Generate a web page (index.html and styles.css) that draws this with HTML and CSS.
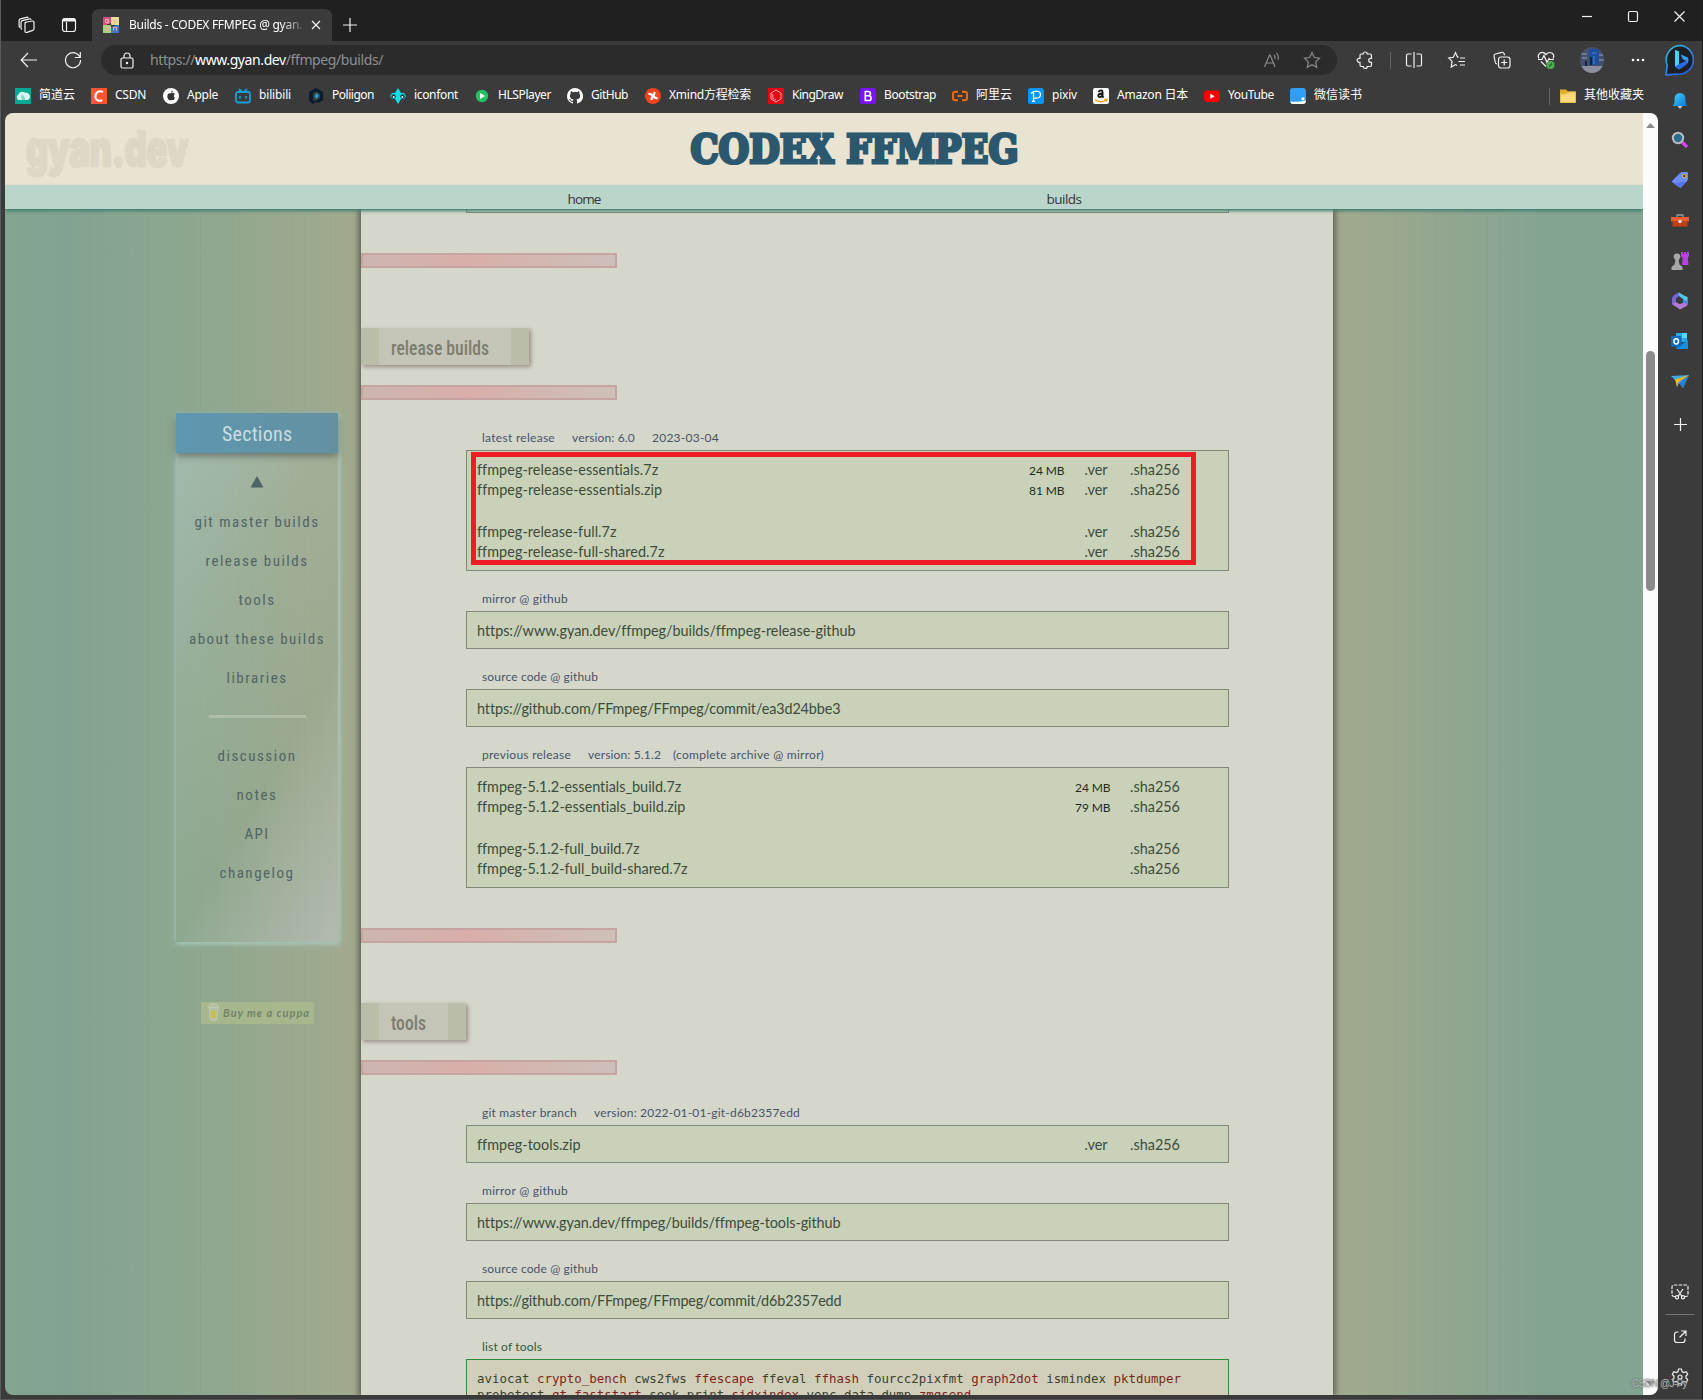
FILE: index.html
```html
<!DOCTYPE html>
<html lang="zh-CN">
<head>
<meta charset="utf-8">
<title>Builds - CODEX FFMPEG @ gyan.dev</title>
<link rel="stylesheet" href="styles.css">
</head>
<body>
<div class="window">
  <header class="titlebar">
    <svg class="ico ws" width="18" height="18" viewBox="0 0 18 18"><path d="M6.500 6.500 14 5q2-.2 2 1.600v6.200q0 1.200-1.300 1.600L9 16.400q-1.800.4-2-1.300V7.500M4 13.500q-1-.3-1-1.500V6.500q0-1.500 1.300-1.900L11.500 2.800q1.200-.2 1.700.9M2 11.500q-.9-.4-.9-1.500V4.800Q1 3.300 2.400 2.900L8.500 1.300q1.200-.3 1.800.6M7 7.800q0-1.500 1.300-1.900"/></svg>
    <svg class="ico tabs" width="16" height="16" viewBox="0 0 16 16"><rect x="1.500" y="1.500" width="13" height="13" rx="2.500"/><path d="M5.500 5v9.500" /><path d="M2 3h12" stroke-width="3"/></svg>
    <div class="tab">
      <svg width="16" height="16" viewBox="0 0 16 16"><path fill="#d24f84" d="M0 0h8v8H0z"/><path fill="#e6dc92" d="M8 0h8v8H8z"/><path fill="#9fd67f" d="M0 8h8v8H0z"/><path fill="#4477c4" d="M8 8h8v8H8z"/><path d="M2.500 2.500h3v3h-3zM5 3v4M10.500 2.500l1.500 2 1.500-2M12 4.500 11 6.500M2.500 10.500h3v3h-3M10.500 13.500v-3h3v3" fill="none" stroke="#f0b0a0"/><path d="M4 7.500h3M9 8.500h3M7 6l2 4" stroke="#333"/></svg>
      <span class="tab-title"><span data-w="173">Builds - CODEX FFMPEG @ gyan.</span></span>
      <svg class="ico" width="10" height="10" viewBox="0 0 10 10"><path d="m1 1 8 8M9 1 1 9"/></svg>
    </div>
    <svg class="ico newtab" width="14" height="14" viewBox="0 0 14 14"><path d="M7 0v14M0 7h14"/></svg>
    <div class="caption">
      <svg class="ico" width="10" height="11" viewBox="0 0 10 11"><path d="M0 5.500h10"/></svg>
      <svg class="ico" width="10" height="11" viewBox="0 0 10 11"><rect x=".5" y=".5" width="9" height="10" rx="1.500"/></svg>
      <svg class="ico" width="11" height="11" viewBox="0 0 11 11"><path d="m.5.5 10 10M10.500.5l-10 10"/></svg>
    </div>
  </header>

  <div class="toolbar">
    <svg class="ico" width="18" height="16" viewBox="0 0 18 16"><path d="M17 8H1.500M8 1 1.200 8 8 15"/></svg>
    <svg class="ico" width="18" height="18" viewBox="0 0 18 18"><path d="M16 6.500A7.500 7.500 0 1 0 16.500 9M16.300 1v5.500h-5.500"/></svg>
    <div class="omnibox">
      <svg class="ico" width="14" height="17" viewBox="0 0 14 17"><rect x="1" y="6" width="12" height="10" rx="1.500"/><path d="M4 6V4a3 3 0 0 1 6 0v2"/><circle cx="7" cy="11" r=".6"/></svg>
      <span class="url"><span data-w="233">https://<b>www.gyan.dev</b>/ffmpeg/builds/</span></span>
      <svg class="ico dim" width="17" height="17" viewBox="0 0 17 17"><path d="m1.500 15 5-12h.6l5 12M3.500 11h6.500M11 3q1.500 1.800.8 4M13.300.8q3 3 1.500 7" /></svg>
      <svg class="ico dim" width="18" height="18" viewBox="0 0 18 18"><path d="m9 1.500 2.300 5 5.200.7-3.800 3.700 1 5.400L9 13.700l-4.700 2.600 1-5.400L1.500 7.200l5.200-.7z"/></svg>
    </div>
    <svg class="ico" width="18" height="18" viewBox="0 0 18 18"><path d="M5 3h2.200a2 2 0 0 1 4 0H14q1.500 0 1.500 1.500v2.800h-.8a2 2 0 0 0 0 4h.8v2.700q0 1.500-1.500 1.500h-2.800a2 2 0 0 1-4 0H5.500Q4 15.500 4 14v-2.700h-.8a2 2 0 0 1 0-4H4V4.500Q4 3 5 3z"/></svg>
    <i class="vline"></i>
    <svg class="ico" width="18" height="18" viewBox="0 0 18 18"><path d="M6.500 3H3Q1.500 3 1.500 4.500v9Q1.500 15 3 15h3.500M9 1v16M11.500 3H15q1.500 0 1.500 1.500v9q0 1.500-1.500 1.500h-3.500"/></svg>
    <svg class="ico" width="18" height="18" viewBox="0 0 18 18"><path d="m10.500 6.200-1-.1-2-4.500-2.200 4.700-4.500.7 3.300 3.400L3.200 16l4.300-2.400 1.500.9M12 7h5M10.500 10.500H17M12 14h5"/></svg>
    <svg class="ico" width="18" height="18" viewBox="0 0 18 18"><rect x="5.500" y="6" width="11.500" height="11" rx="2.500"/><path d="M11.200 8.500v6M8.200 11.500h6M4 13q-1.500-.3-1.800-2L1 5.200Q.9 3.500 2.500 3L8.700 1.300q1.700-.3 2.300 1.200l.6 1.800"/></svg>
    <svg class="ico" width="18" height="18" viewBox="0 0 18 18"><path d="M2 7.500Q0 4 3.200 1.900 6.500.5 9 3.500q2.500-3 5.800-1.500Q18 4 16 7.500M1 8.500h4l2-4 3 7 2-4 1 1h4M4 10.500l5 5"/><circle cx="13.500" cy="14" r="4" fill="#4caf50" stroke="none"/><path d="m12 15.500 3-3" stroke="#245a28"/></svg>
    <svg width="24" height="26" viewBox="0 0 24 26"><clipPath id="av"><ellipse cx="12" cy="13" rx="12" ry="13"/></clipPath><g clip-path="url(#av)"><path fill="#46506a" d="M0 0h24v26H0z"/><path fill="#1d4fa0" d="M9 2h10v16H9z"/><path fill="#8d8f9e" d="M0 19h24v7H0z"/><path d="M1 7h6M2 11h5M19 8h5M19 13h5" stroke="#8ba0c8"/><path d="M12 6h5M14 9v8" stroke="#4f7fc8"/><path fill="#15204a" d="M10 10h2v8h-2zM5 14h2v5H5z"/></g></svg>
    <svg width="14" height="4" viewBox="0 0 14 4" fill="#fff"><circle cx="2" cy="2" r="1.300"/><circle cx="7" cy="2" r="1.300"/><circle cx="12" cy="2" r="1.300"/></svg>
    <svg width="32" height="32" viewBox="0 0 32 32"><defs><linearGradient id="bg" x1="0" y1="0" x2=".6" y2="1"><stop offset="0" stop-color="#38c6d8"/><stop offset="1" stop-color="#2a62e8"/></linearGradient></defs><path d="M16.500 1.500a14.300 14.300 0 1 1-3 28.600l-11.500.7 1.200-9.500A14.500 14.500 0 0 1 16.500 1.500z" fill="#1c1f26" stroke="url(#bg)" stroke-width="1.600"/><path fill="#2f9df4" d="m11 6 4 1.500v13L22.500 17l-4-2-1.700-4.500 7.200 3q1.500 4.500-2 7L15 25.500l-4-3z"/><path fill="#2a66e6" d="m15 20.500-4 2 4 3 7-4.500q2-2 1-5z"/><path fill="#4bd0f2" d="m11 6 4 1.500v12l-4 3z"/></svg>
  </div>

  <div class="main">
    <div class="left">
      <nav class="bookmarks">
        <a><svg width="16" height="16" viewBox="0 0 16 16"><path fill="#00a896" d="M0 0h16v16H0z"/><path fill="#d8f7f1" d="M3.500 12a3 3 0 0 1 0-5.500A4 4 0 0 1 10 4.700 4 4 0 0 1 13 12z"/><path fill="#7fd6c9" d="M6 8q3-3 4 4H7z"/></svg><span data-w="36">简道云</span></a>
        <a><svg width="16" height="16" viewBox="0 0 16 16"><path fill="#fc5531" d="M0 0h16v16H0z"/><path d="M12 4.200Q9 2.500 6.300 4.200 3.800 6.500 4.500 10q1.500 4 6.800 2.300" fill="none" stroke="#fff" stroke-width="2"/></svg><span data-w="31">CSDN</span></a>
        <a><svg width="16" height="16" viewBox="0 0 16 16"><circle cx="8" cy="8" r="8" fill="#fff"/><path fill="#333" d="M8 5.300q3-1.200 3.800.7-2 2 .2 4-1.500 3.200-4 2-2.500 1-3.700-2.500Q4 4.500 8 5.300zM8 4.700q0-2 2-2.200 0 2-2 2.200z"/></svg><span data-w="31">Apple</span></a>
        <a><svg width="16" height="16" viewBox="0 0 16 16" fill="none" stroke="#12a0dc" stroke-width="1.800"><rect x="1" y="4" width="14" height="10.500" rx="2"/><path d="M4 1l2.500 2.500M12 1 9.500 3.500M5 8v2.500M11 8v2.500"/></svg><span data-w="32">bilibili</span></a>
        <a><svg width="16" height="16" viewBox="0 0 16 16"><path fill="#0a1d2e" d="m8 0 7 4v8l-5 3-2-1-3 2-4-3V4z"/><path fill="#3a3a3a" d="m8 3.500 4 2.300v4.400l-4 2.300-1.500 1L5 12V5z"/><path fill="#18a2cf" d="m8.500 4.700 2.500 3-2.500 3.500L6.500 8z"/></svg><span data-w="42">Poliigon</span></a>
        <a><svg width="16" height="16" viewBox="0 0 16 16"><path fill="#0de1ea" d="m8 0 3 5h3l2 3-2 3h-3l-3 5-3-5H2L0 8l2-3h3z"/><circle cx="3.500" cy="8.500" r="2.200" fill="#203a44"/><circle cx="12.500" cy="8.500" r="2.200" fill="#203a44"/><circle cx="3.700" cy="9" r=".9" fill="#fff"/><circle cx="12.300" cy="9" r=".9" fill="#fff"/></svg><span data-w="44">iconfont</span></a>
        <a><svg width="16" height="16" viewBox="0 0 16 16"><circle cx="8" cy="8" r="6.200" fill="#25c263"/><path fill="#fff" d="m6 5 5 3-5 3z"/></svg><span data-w="53">HLSPlayer</span></a>
        <a><svg width="16" height="16" viewBox="0 0 16 16"><path fill="#fff" d="M8 0a8 8 0 0 0-2.530 15.590c.4.070.55-.17.55-.38v-1.490c-2.010.37-2.530-.49-2.690-.94-.09-.23-.48-.94-.82-1.130-.28-.15-.68-.52-.01-.53.63-.01 1.080.58 1.230.82.720 1.210 1.870.87 2.330.66.070-.52.280-.87.510-1.070-1.780-.2-3.640-.89-3.640-3.950 0-.87.310-1.590.820-2.150-.08-.2-.36-1.020.08-2.120 0 0 .67-.21 2.200.82a7.400 7.400 0 0 1 4 0c1.530-1.040 2.200-.82 2.200-.82.44 1.100.16 1.920.08 2.120.51.56.82 1.270.82 2.150 0 3.070-1.870 3.750-3.650 3.950.29.250.54.730.54 1.480v2.200c0 .21.15.46.55.38A8 8 0 0 0 8 0z"/></svg><span data-w="37">GitHub</span></a>
        <a><svg width="16" height="16" viewBox="0 0 16 16"><circle cx="8" cy="8" r="8" fill="#f0441f"/><path d="M3.500 6q2.500-.5 4.500 2t4.500 2M9.500 4q0 3-1.500 4t-1.500 4" stroke="#fff" stroke-width="2.300" fill="none"/></svg><span data-w="82">Xmind方程检索</span></a>
        <a><svg width="16" height="16" viewBox="0 0 16 16"><path fill="#e30613" d="M0 0h16v16H0z"/><path d="m8 2 5 3v6l-5 3-5-3V5zM4.800 6v4.200L8 12" fill="none" stroke="#f6a9a9"/></svg><span data-w="51">KingDraw</span></a>
        <a><svg width="16" height="16" viewBox="0 0 16 16"><rect width="16" height="16" rx="2.500" fill="#7a11f7"/><path d="M5.300 3.500v9h3.500a2.300 2.300 0 0 0 0-4.700H5.300h3a2.100 2.100 0 0 0 0-4.300z" fill="none" stroke="#fff" stroke-width="1.600"/></svg><span data-w="52">Bootstrap</span></a>
        <a><svg width="16" height="16" viewBox="0 0 16 16" fill="none" stroke="#ff6a00" stroke-width="1.900"><path d="M6 3.800H3Q1 3.800 1 6v4q0 2.200 2 2.200h3M10 3.800h3q2 0 2 2.200v4q0 2.200-2 2.200h-3M5.500 8h5"/></svg><span data-w="36">阿里云</span></a>
        <a><svg width="16" height="16" viewBox="0 0 16 16"><rect width="16" height="16" rx="2.500" fill="#0096fa"/><path d="M3 5.500q2-2.300 5.500-2.300 4 .3 4 3.500-.4 3.500-4.500 3.500H5.500M5.500 4.500v9M4 13.300h3" fill="none" stroke="#fff" stroke-width="1.300"/></svg><span data-w="25">pixiv</span></a>
        <a><svg width="16" height="16" viewBox="0 0 16 16"><rect width="16" height="16" rx="2" fill="#fff"/><path d="M5.300 3.700Q9.500 1 9.500 4v4.500l1 1M9.500 5.500Q5 5.500 5.300 8q1 2.500 4.200-.5" fill="none" stroke="#111" stroke-width="1.900"/><path d="M2 11.500q5.500 4 11 .8M11.500 11.500l2.500-.3-.7 2.300" fill="none" stroke="#f90" stroke-width="1.300"/></svg><span data-w="71">Amazon 日本</span></a>
        <a><svg width="16" height="16" viewBox="0 0 16 16"><rect y="2.500" width="16" height="11.500" rx="3" fill="#f00"/><path fill="#fff" d="m6.300 5.700 4.500 2.600-4.500 2.500z"/></svg><span data-w="46">YouTube</span></a>
        <a><svg width="16" height="16" viewBox="0 0 16 16"><rect width="16" height="16" rx="3" fill="#2f9ff5"/><path fill="#fff" d="M0 13.500q8 1 16-1l-.5 2.300q-1 1.200-3 1.200H3Q1 16 0 13.500z"/><circle cx="13" cy="10.800" r="1.600" fill="#fff"/></svg><span data-w="48">微信读书</span></a>
        <a class="other"><svg width="16" height="16" viewBox="0 0 16 16"><path fill="#e4ad27" d="M0 1.500h6l2 2h8V13H0z"/><path fill="#ffd97a" stroke="#e9bd4d" d="M.5 6h6l2-2h7v10.500H.5z"/></svg><span data-w="60">其他收藏夹</span></a>
      </nav>

      <div class="viewport">
        <div class="page">
          <div class="masthead">
            <svg width="172" height="60" viewBox="0 0 172 60"><text class="brand" x="3" y="41" textLength="162" lengthAdjust="spacingAndGlyphs">gyan.dev</text></svg>
            <svg class="logo" width="336" height="60" viewBox="0 0 336 60"><text class="slab" x="3.500" y="37.500" textLength="328" lengthAdjust="spacingAndGlyphs">CODEX FFMPEG</text></svg>
          </div>
          <div class="sitenav"><a><span data-w="33">home</span></a><a><span data-w="35">builds</span></a></div>
          <div class="body">
            <aside class="side">
              <div class="sections">
                <h2>
                  <svg width="160" height="40" viewBox="0 0 160 40"><text class="cond head" x="46" y="28" textLength="70" lengthAdjust="spacing">Sections</text></svg>
                </h2>
                <ul>
                  <li class="up"><svg width="14" height="12" viewBox="0 0 14 12"><path fill="#4f6265" d="M7 0 13.500 11.500H.5z"/></svg></li>
                  <li><span data-w="125">git master builds</span></li>
                  <li><span data-w="103">release builds</span></li>
                  <li><span data-w="37">tools</span></li>
                  <li><span data-w="136">about these builds</span></li>
                  <li><span data-w="61">libraries</span></li>
                  <li class="rule"><hr></li>
                  <li><span data-w="79">discussion</span></li>
                  <li><span data-w="41">notes</span></li>
                  <li><span data-w="25">API</span></li>
                  <li><span data-w="75">changelog</span></li>
                </ul>
              </div>
              <div class="cuppa"><svg width="13" height="18" viewBox="0 0 13 18"><path fill="#b5bfa2" stroke="#c0c8b0" d="M2 5h9l-1 12H3.500zM1 4.500 3 1h7l2 3.500z"/><path fill="#c8c04a" d="M4 8h5.500L9 15H4.500z"/></svg><span data-w="87">Buy me a cuppa</span></div>
            </aside>
            <main class="content">
              <div class="box top"></div>
              <div class="bar"></div>
              <h3 class="w-release"><svg width="132" height="37" viewBox="0 0 132 37"><text class="cond" x="12" y="27" textLength="98" lengthAdjust="spacingAndGlyphs">release builds</text></svg></h3>
              <div class="bar after"></div>

              <div class="label first"><span data-w="73">latest release</span><span data-w="63">version: 6.0</span><span data-w="67">2023-03-04</span></div>
              <div class="box five">
                <div class="marker"></div>
                <div class="row"><span data-w="181">ffmpeg-release-essentials.7z</span><small data-w="35.5">24 MB</small><span data-w="23">.ver</span><span data-w="50">.sha256</span></div>
                <div class="row"><span data-w="185">ffmpeg-release-essentials.zip</span><small data-w="35.5">81 MB</small><span data-w="23">.ver</span><span data-w="50">.sha256</span></div>
                <div class="row"></div>
                <div class="row"><span data-w="139">ffmpeg-release-full.7z</span><small></small><span data-w="23">.ver</span><span data-w="50">.sha256</span></div>
                <div class="row"><span data-w="187">ffmpeg-release-full-shared.7z</span><small></small><span data-w="23">.ver</span><span data-w="50">.sha256</span></div>
              </div>
              <div class="label"><span data-w="86">mirror @ github</span></div>
              <div class="box"><div class="row"><span data-w="377">https://www.gyan.dev/ffmpeg/builds/ffmpeg-release-github</span></div></div>
              <div class="label"><span data-w="116">source code @ github</span></div>
              <div class="box"><div class="row"><span data-w="363">https://github.com/FFmpeg/FFmpeg/commit/ea3d24bbe3</span></div></div>
              <div class="label"><span data-w="89">previous release</span><span class="near" data-w="73">version: 5.1.2</span><span data-w="151">(complete archive @ mirror)</span></div>
              <div class="box five prev">
                <div class="row"><span data-w="204">ffmpeg-5.1.2-essentials_build.7z</span><small data-w="35.5">24 MB</small><span data-w="50">.sha256</span></div>
                <div class="row"><span data-w="208">ffmpeg-5.1.2-essentials_build.zip</span><small data-w="35.5">79 MB</small><span data-w="50">.sha256</span></div>
                <div class="row"></div>
                <div class="row"><span data-w="162">ffmpeg-5.1.2-full_build.7z</span><small></small><span data-w="50">.sha256</span></div>
                <div class="row"><span data-w="210">ffmpeg-5.1.2-full_build-shared.7z</span><small></small><span data-w="50">.sha256</span></div>
              </div>

              <div class="bar"></div>
              <h3 class="w-tools"><svg width="69" height="37" viewBox="0 0 69 37"><text class="cond" x="12" y="27" textLength="35" lengthAdjust="spacingAndGlyphs">tools</text></svg></h3>
              <div class="bar after"></div>

              <div class="label first"><span data-w="95">git master branch</span><span data-w="206">version: 2022-01-01-git-d6b2357edd</span></div>
              <div class="box"><div class="row"><span data-w="103">ffmpeg-tools.zip</span><small></small><span data-w="23">.ver</span><span data-w="50">.sha256</span></div></div>
              <div class="label"><span data-w="86">mirror @ github</span></div>
              <div class="box"><div class="row"><span data-w="362">https://www.gyan.dev/ffmpeg/builds/ffmpeg-tools-github</span></div></div>
              <div class="label"><span data-w="116">source code @ github</span></div>
              <div class="box"><div class="row"><span data-w="364">https://github.com/FFmpeg/FFmpeg/commit/d6b2357edd</span></div></div>
              <div class="label green"><span data-w="60">list of tools</span></div>
              <div class="tools">aviocat <b>crypto_bench</b> cws2fws <b>ffescape</b> ffeval <b>ffhash</b> fourcc2pixfmt <b>graph2dot</b> ismindex <b>pktdumper</b><br>probetest <b>qt-faststart</b> seek_print <b>sidxindex</b> venc_data_dump <b>zmqsend</b></div>
            </main>
          </div>
        </div>
        <div class="scroll">
          <svg width="9" height="5" viewBox="0 0 9 5"><path fill="#8b8b8b" d="M4.500 0 9 5H0z"/></svg>
          <i class="thumb"></i>
          <svg width="9" height="5" viewBox="0 0 9 5"><path fill="#8b8b8b" d="M4.500 5 9 0H0z"/></svg>
        </div>
      </div>
    </div>

    <aside class="rail">
      <svg width="18" height="18" viewBox="0 0 18 18"><defs><linearGradient id="be" x1="0" y1="0" x2="1" y2="1"><stop offset="0" stop-color="#45cdfa"/><stop offset="1" stop-color="#0a78d6"/></linearGradient></defs><path fill="#ccc" d="M6.500 14h5l-2.500 3z"/><path fill="url(#be)" d="M9 1q5.500.5 5.500 6v3.500L16 14H2l1.500-3.500V7Q3.500 1.500 9 1z"/></svg>
      <svg width="18" height="18" viewBox="0 0 18 18"><path d="m11 11 5 5" stroke="#d346f2" stroke-width="3.200"/><circle cx="7" cy="7" r="5.200" fill="#2a6f8f" stroke="#bcbcbc" stroke-width="2"/></svg>
      <svg width="18" height="18" viewBox="0 0 18 18"><path fill="#6f8df8" d="M8.500 2.500 10.500 1H16q1 0 1 1v6q0 1-1 2l-6.500 7L1 11q-.3-1 .5-1.500z"/><path fill="#5a74f0" d="m9.500 17-7-4.500L16 10z"/><circle cx="13.300" cy="5" r="1.700" fill="#333" stroke="#f3c623"/></svg>
      <svg width="18" height="18" viewBox="0 0 18 18"><path d="M6 5V3h6v2" fill="none" stroke="#999" stroke-width="1.300"/><path fill="#ec5b2d" d="M0 5h18v4.500H0z"/><path fill="#c43e18" d="M1.500 9.500h15v5h-15z"/><circle cx="9" cy="9.500" r="1.800" fill="#ddd"/></svg>
      <svg width="18" height="18" viewBox="0 0 18 18"><path fill="#bd3fe6" d="M10 0h2v2h1V0h2v2h1V0h2v4l-1.200 2 .7 7H11l.7-7L10 4z"/><path fill="#a8a8a8" d="M6 1.500A3 3 0 0 1 8 7l.5 1H7.500l1 4.500 3 2.500v3H.5v-3l3-2.500 1-4.500H3.500L4 7a3 3 0 0 1 2-5.500z"/></svg>
      <svg width="18" height="18" viewBox="0 0 18 18"><path fill="#7a63d8" d="M8 .5Q1.500 3 1 6.500V12l4 2.500V7q.3-2 4-3z"/><path fill="#b678d8" d="m1 12 4-2 4 2 3-1.500 5-.5q-.3 3-1.500 4L9 17.500z"/><path fill="#3b8ae8" d="M12 5.500 16.500 5q.8 3 .3 7l-4.800-1.500z"/><path fill="#54c7ee" d="m8 .5 5 3 3.500 1.500-.5 4-4-2L8 4z"/><path fill="#3b3b3b" d="m9 6 3 1.500v3L9 12l-3.500-1.500v-3z"/></svg>
      <svg width="18" height="18" viewBox="0 0 18 18"><path fill="#28a8ea" d="M5 1h11v9H5z"/><path fill="#50d9ff" d="M11 1h5v5h-5z"/><path fill="#0a66b8" d="M5 10l6 2 6-4v9H5z"/><path fill="#1490df" d="m5 17 12-9v9z"/><rect y="4" width="10.500" height="10.500" rx="1" fill="#0f6cbd"/><ellipse cx="5.200" cy="9.300" rx="2.300" ry="2.600" fill="none" stroke="#fff" stroke-width="1.500"/></svg>
      <svg width="18" height="18" viewBox="0 0 18 18"><path fill="#41a5ee" d="m0 4 18-1-6 13-4-5-2 4-1-6z"/><path fill="#ffb900" d="M4 7.500 18 3 7 10.500 6 15 4.500 9z"/><path fill="#2b7cd3" d="m8 11 10-8-6 13z"/></svg>
      <svg class="ico plus" width="13" height="13" viewBox="0 0 13 13"><path d="M6.500 0v13M0 6.500h13"/></svg>
      <svg class="ico snip" width="18" height="16" viewBox="0 0 18 16"><path d="M4 12.500H3q-2 0-2-2V3q0-2 2-2h12q2 0 2 2v7.500q0 2-2 2h-1" stroke-dasharray="3.500 1.200"/><path d="m6 5 5 7.500M12 5l-5 7.500"/><circle cx="6" cy="13.300" r="1.600"/><circle cx="12" cy="13.300" r="1.600"/></svg>
      <i class="hline"></i>
      <svg class="ico ext" width="14" height="14" viewBox="0 0 14 14"><path d="M5.500 2H4Q1.500 2 1.500 4.500v5.500Q1.500 12.500 4 12.500h5.500q2.500 0 2.500-2.500V8.500M8 1h5v5M13 1 6.500 7.500"/></svg>
      <svg class="ico gear" width="18" height="18" viewBox="0 0 18 18"><circle cx="9" cy="9" r="2"/><path d="M7.500 1h3l.5 2.500 1.800 1 2.400-.8 1.500 2.600L15 8v2l1.700 1.700-1.500 2.600-2.400-.8-1.800 1-.5 2.500h-3L7 14.500l-1.800-1-2.400.8-1.500-2.600L3 10V8L1.300 6.300l1.500-2.600 2.400.8 1.800-1z"/></svg>
    </aside>
  </div>
  <div class="watermark"><span data-w="55">CSDN @J-Py</span></div>
</div>
<script src="fit.js"></script>
</body>
</html>
```
FILE: fit.js
```js
document.querySelectorAll('[data-w]').forEach(function (el) {
  var natural = el.getBoundingClientRect().width;
  var count = Array.from(el.textContent).length;
  if (count > 1) {
    el.style.letterSpacing = ((el.dataset.w - natural) / count).toFixed(3) + 'px';
  }
});
```
FILE: styles.css
```css
* { box-sizing: border-box; }
body { margin: 0; background: #3b3b3b; overflow: hidden; }
svg { display: block; flex: none; overflow: visible; }
.window {
  width: 1703px; height: 1400px; position: relative; overflow: hidden;
  border-left: 1px solid #5a5b5e; border-right: 1px solid #1c1c1c; border-bottom: 1px solid #56565a;
  background: #3b3b3b; color: #fff;
  font: 12px/16px "Noto Sans", "Noto Sans CJK SC", sans-serif;
}
.ico { fill: none; stroke: #f2f2f2; stroke-width: 1.2; }
.ico.dim { stroke: #8c8c8c; }

.titlebar { height: 41px; background: #202020; display: flex; align-items: center; padding-top: 9px; }
.ws { margin-left: 17px; }
.tabs { margin-left: 25px; }
.tab {
  margin-left: 15px; width: 240px; height: 32px; background: #3b3b3b; border-radius: 7px 7px 0 0;
  display: flex; align-items: center; padding: 0 11px;
}
.tab-title {
  margin-left: 10px; width: 175px; white-space: nowrap;
  -webkit-mask-image: linear-gradient(90deg, #000 88%, rgba(0,0,0,.2));
  mask-image: linear-gradient(90deg, #000 88%, rgba(0,0,0,.2));
}
.tab .ico { margin-left: 9px; }
.newtab { margin-left: 11px; }
.caption { margin-left: auto; display: grid; grid-template-columns: repeat(3, 46px); justify-items: center; align-self: flex-start; padding-top: 2px; }

.toolbar {
  height: 38px; display: grid; align-items: center; justify-items: center; padding-left: 6px;
  grid-template-columns: 44px 44px 6px 1236px 3px 50px 3px 41px 46px 44px 44px 48px 44px 40px;
}
.toolbar > :nth-child(3) { grid-column: 4; }
.toolbar > :nth-child(4) { grid-column: 6; }
.omnibox {
  justify-self: stretch; height: 30px; border-radius: 15px; background: #2b2b2b;
  display: flex; align-items: center; padding: 0 16px 0 19px;
}
.url { margin-left: 16px; flex: 1; color: #8f8f8f; font-size: 14px; white-space: nowrap; }
.url b { color: #fff; font-weight: 400; }
.omnibox .dim + .dim { margin-left: 23px; }
.vline { width: 1px; height: 17px; background: #666; justify-self: start; }

.main { display: flex; height: 1316px; }
.left { width: 1657px; }
.bookmarks {
  height: 34px; display: grid; align-items: center; padding-left: 14px;
  grid-template-columns: 76px 72px 72px 73px 82px 84px 93px 78px 123px 92px 92px 76px 65px 111px 86px 259px 100px;
}
.bookmarks a { display: flex; align-items: center; gap: 8px; white-space: nowrap; }
.bookmarks a svg { margin-top: -1px; }
.bookmarks a span { padding-bottom: 2px; }
.bookmarks .other { border-left: 1px solid #666; padding-left: 10px; height: 17px; }

.viewport { margin-left: 4px; width: 1653px; height: 1282px; display: flex; border-radius: 8px; overflow: hidden; }
.page { width: 1638px; display: flex; flex-direction: column; overflow: hidden; }
.masthead { height: 72px; flex: none; background: #e9e3d1; padding: 12px 0 0 18px; display: flex; }
.masthead .logo { margin-left: 492px; }
.brand { font: 900 48px Inter, Roboto, sans-serif; fill: #ddd8c5; stroke: #ddd8c5; stroke-width: 2.4; }
.slab { font: bold 39px "DejaVu Serif", serif; fill: #2b586f; stroke: #2b586f; stroke-width: 3.2; }
.sitenav {
  height: 24px; flex: none; background: #bad6cb; position: relative; z-index: 2;
  box-shadow: 0 2px 3px #3f7c70; padding: 0 339px; display: flex;
  font: 13.500px/28px "Open Sans", sans-serif; color: #333;
}
.sitenav a { flex: 1; text-align: center; }
.body {
  flex: 1; min-height: 0; overflow: hidden; display: flex;
  background:
    repeating-linear-gradient(90deg, rgba(120,110,100,.05) 0 1px, transparent 1px 5px, rgba(90,130,150,.03) 5px 6px, transparent 6px 13px),
    linear-gradient(90deg, #83a592 0, #82a391 60px, #8ba78f 170px, #a3aa8e 356px, #a3aa8e 1328px, #83a491 1540px, #83a491);
}
.side { width: 356px; padding: 204px 0 0 171px; }
.sections {
  width: 162px; height: 529px;
  background: linear-gradient(120deg, rgba(200,220,225,.4), rgba(180,195,180,.25) 35%, rgba(150,170,145,.2) 65%, rgba(205,210,220,.42));
  box-shadow: 1px 1px 5px 1px #a9cbc2;
}
.sections h2 { margin: 0; height: 40px; background: linear-gradient(90deg, #5e97b0, #6491a0); box-shadow: 0 3px 7px rgba(70,75,75,.6); }
.cond { font: 500 20px "Roboto Condensed", Roboto, sans-serif; fill: #7d7d6f; }
.cond.head { font-weight: 400; fill: #ccdde2; }
.sections ul { margin: 0; padding: 11px 0 0; list-style: none; font: 15px/39px "Roboto Condensed", "Liberation Sans Narrow", Roboto, sans-serif; color: #526466; }
.sections li { height: 39px; display: flex; align-items: center; justify-content: center; white-space: nowrap; }
.sections .up { padding-bottom: 4px; }
.sections .rule { padding-bottom: 2px; }
.sections hr { width: 97px; height: 3px; border: 0; margin: 0; background: #adbda8; }
.cuppa {
  margin: 60px 0 0 25px; width: 113px; height: 22px; background: #a6b78d; display: flex; align-items: center; gap: 3px;
  padding: 0 0 2px 6px; color: #71836a; font: italic bold 11px/19px Lato, sans-serif; white-space: nowrap;
}

.content { width: 972px; background: #d5d7ca; box-shadow: 0 0 6px 2px #55594e; font: 14.400px/20.7px Lato, sans-serif; color: #3c4b3c; }
.bar {
  width: 256px; height: 15px; margin-top: 40px; border: 2px solid #c6a4a1;
  background: linear-gradient(90deg, #cdb5b1, #d9aea9 42%, #cdc0b9);
}
.bar.after { margin-top: 20px; }
h3 { margin: 60px 0 0; height: 37px; padding: 0 18px; background: #bbbdab; box-shadow: 2px 2px 4px #9b8f86; }
h3 svg { background: #c4c5b7; }
.w-release { width: 168px; }
.w-tools { width: 105px; }
.label { height: 40px; padding: 18px 0 0 121px; display: flex; gap: 17px; font-size: 12px; line-height: 20px; color: #47536b; white-space: nowrap; }
.label.first { height: 50px; padding-top: 28px; }
.label .near { margin-right: -5px; }
.label.green { color: #2c5a43; }
.box { margin-left: 105px; width: 763px; height: 38px; border: 1px solid #808878; background: #c9d2b8; padding: 8.500px 0 0 10px; position: relative; }
.box.five { height: 121px; }
.box.top { height: 4px; border-top: 0; padding: 0; }
.row { height: 20.7px; display: grid; grid-template-columns: 552px 55.5px 45.5px 60px; align-items: baseline; justify-items: start; white-space: nowrap; }
.prev .row { grid-template-columns: 598px 55px 60px; }
.row small { font-size: 12px; color: #1f2b22; }
.marker { position: absolute; left: 4px; top: 1px; width: 725px; height: 113px; border: 5px solid #ee1c24; }
.tools {
  margin-left: 105px; width: 763px; height: 60px; border: 1px solid #2f8a3a; background: #d1cfba; padding: 11px 0 0 10px;
  font: 12.440px/16px "DejaVu Sans Mono", monospace; color: #3a3f30; white-space: nowrap;
}
.tools b { font-weight: 400; color: #7e1f20; }

.scroll { width: 15px; background: #fcfcfc; display: flex; flex-direction: column; align-items: center; padding: 10px 0 9px; }
.thumb { width: 9px; height: 240px; border-radius: 5px; background: #8b8b8b; margin: 223px 0 auto; }

.rail { width: 44px; display: flex; flex-direction: column; align-items: center; padding-top: 13px; gap: 22px; }
.rail > svg:first-child { margin-bottom: -1px; }
.rail > svg:nth-child(3) { margin-bottom: 1px; }
.rail .plus { margin-top: 6px; }
.rail .snip { margin-top: auto; margin-bottom: -8px; }
.hline { width: 28px; height: 1px; background: #777; }
.rail .ext { margin-top: -7px; }
.rail .gear { margin: 2px 0 9px; }
.watermark { position: absolute; left: 1631px; top: 1376px; font: 10px/16px "Liberation Sans", sans-serif; color: #b9b9b9; text-shadow: 0 0 2px #444; white-space: nowrap; }
```
